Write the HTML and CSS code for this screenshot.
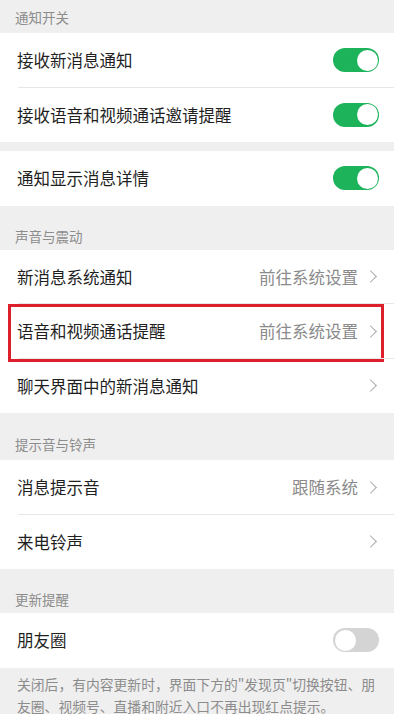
FILE: index.html
```html
<!DOCTYPE html>
<html lang="zh-CN">
<head>
<meta charset="utf-8">
<title>新消息通知</title>
<link rel="stylesheet" href="styles.css">
</head>
<body>
<div class="page">
  <div class="group-title first">通知开关</div>
  <div class="group">
    <div class="row divided"><span class="label">接收新消息通知</span><span class="switch on"></span></div>
    <div class="row"><span class="label">接收语音和视频通话邀请提醒</span><span class="switch on"></span></div>
  </div>
  <div class="spacer"></div>
  <div class="group">
    <div class="row"><span class="label">通知显示消息详情</span><span class="switch on"></span></div>
  </div>

  <div class="group-title">声音与震动</div>
  <div class="group">
    <div class="row divided"><span class="label">新消息系统通知</span><span class="value">前往系统设置</span><span class="chevron"></span></div>
    <div class="row divided highlighted"><span class="label">语音和视频通话提醒</span><span class="value">前往系统设置</span><span class="chevron"></span><span class="mark"></span></div>
    <div class="row"><span class="label">聊天界面中的新消息通知</span><span class="chevron"></span></div>
  </div>

  <div class="group-title tall">提示音与铃声</div>
  <div class="group">
    <div class="row divided"><span class="label">消息提示音</span><span class="value">跟随系统</span><span class="chevron"></span></div>
    <div class="row"><span class="label">来电铃声</span><span class="chevron"></span></div>
  </div>

  <div class="group-title">更新提醒</div>
  <div class="group">
    <div class="row"><span class="label">朋友圈</span><span class="switch"></span></div>
  </div>
  <div class="note">关闭后，有内容更新时，界面下方的"发现页"切换按钮、朋友圈、视频号、直播和附近入口不再出现红点提示。</div>
</div>
</body>
</html>
```
FILE: styles.css
```css
* { box-sizing: border-box; }
html, body { margin: 0; padding: 0; background: #ffffff; }
body {
  font-family: "Noto Sans CJK SC", "Noto Sans", sans-serif;
  color: #1f1f1f;
  overflow: hidden;
  height: 714px;
}
.page {
  width: 394px;
  background: #efefef;
  min-height: 714px;
}
.group-title {
  height: 44px;
  display: flex;
  align-items: flex-end;
  padding: 0 0 4px 15px;
  font-size: 13.5px;
  line-height: 20px;
  color: #8c8c8c;
}
.group-title.first { height: 33px; padding-bottom: 6px; }
.group-title.tall { height: 47px; padding-bottom: 6px; }
.spacer { height: 9px; }
.group { background: #ffffff; }
.row {
  position: relative;
  height: 54.5px;
  display: flex;
  align-items: center;
  padding: 0 15px 0 17px;
}
.row.divided::after {
  content: "";
  position: absolute;
  left: 18px;
  right: 0;
  bottom: 0;
  height: 1px;
  background: #e6e6e6;
}
.label {
  flex: 1;
  font-size: 16.5px;
  line-height: 24px;
  color: #1f1f1f;
}
.value {
  font-size: 16.5px;
  line-height: 24px;
  color: #8a8a8a;
  margin-right: 8px;
}
.chevron {
  width: 9px;
  height: 9px;
  border-top: 1.3px solid #a8a8a8;
  border-right: 1.3px solid #a8a8a8;
  transform: rotate(45deg);
  margin-right: 4px;
}
.switch {
  position: relative;
  width: 46px;
  height: 24px;
  border-radius: 12px;
  background: #d4d4d4;
}
.switch::after {
  content: "";
  position: absolute;
  top: 1.5px;
  left: 1.5px;
  width: 21px;
  height: 21px;
  border-radius: 50%;
  background: #ffffff;
}
.switch.on { background: #1cb35b; }
.switch.on::after { left: 23.5px; }
.mark {
  position: absolute;
  left: 8px;
  right: 10px;
  top: 0;
  bottom: -3px;
  border: 3px solid #dc1f2b;
  pointer-events: none;
}
.note {
  padding: 5px 10px 8px 17px;
  font-size: 13.8px;
  line-height: 22px;
  color: #8c8c8c;
}
```
